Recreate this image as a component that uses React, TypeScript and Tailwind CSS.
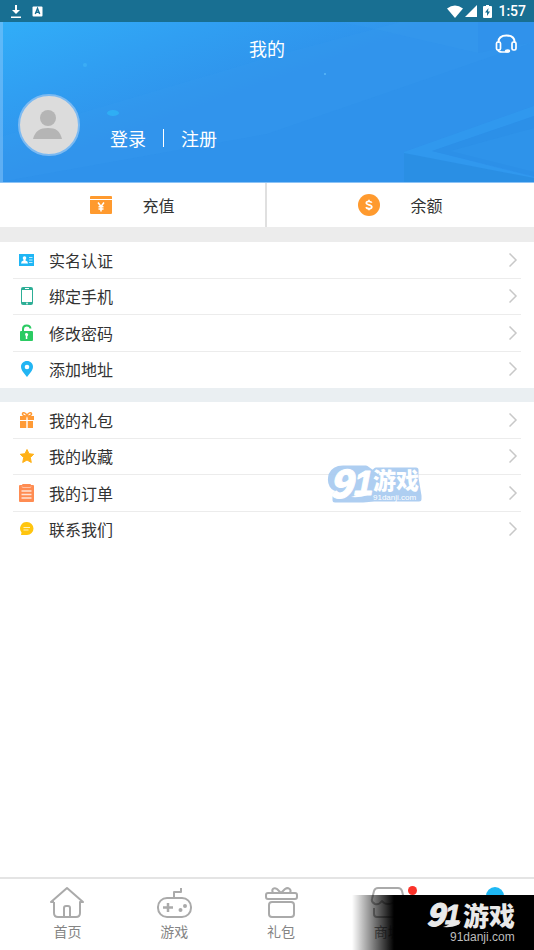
import type { ReactNode } from "react";

function HeaderArt() {
  return (
    <svg
      className="absolute inset-0 h-full w-full"
      viewBox="0 0 534 160"
      preserveAspectRatio="none"
      aria-hidden="true"
    >
      <defs>
        <linearGradient id="sky" gradientUnits="userSpaceOnUse" x1="50" y1="-20" x2="100" y2="120">
          <stop offset="0" stopColor="#31aef8" />
          <stop offset="0.5" stopColor="#309ff2" />
          <stop offset="1" stopColor="#2f92eb" />
        </linearGradient>
      </defs>
      <rect width="534" height="160" fill="url(#sky)" />
      <path d="M0 115L267 36L400 0H534V20L267 112L0 160Z" fill="#3aa2f4" opacity="0.15" />
      <path d="M340 0H478V31L370 6Z" fill="#3b9ff2" opacity="0.2" />
      <path d="M478 0H534V20L478 31Z" fill="#2385e0" opacity="0.1" />
      <path d="M404 130L534 84V94L432 129L534 155V160H404Z" fill="#319aef" opacity="0.8" />
      <path d="M404 131L534 156V160H404Z" fill="#2789de" opacity="0.6" />
      <path d="M432 129L534 94V154Z" fill="#2c90e8" />
      <path d="M450 129L534 106V150Z" fill="#2f95ec" opacity="0.5" />
      <ellipse cx="113" cy="91" rx="6" ry="3" fill="#2fb4f5" opacity="0.8" />
      <circle cx="85" cy="43" r="2" fill="#42b5f7" opacity="0.6" />
      <circle cx="325" cy="52" r="1" fill="#5ab8f8" />
      <rect width="3" height="160" fill="#8cc8fa" opacity="0.5" />
    </svg>
  );
}

function HeadsetIcon() {
  return (
    <svg width="22" height="20" viewBox="0 0 22 20" fill="none" stroke="#fff" strokeWidth="2" strokeLinecap="round">
      <path d="M3.500 8C3.500 4 6.500 1.500 11.500 1.500S19.500 4 19.500 8" />
      <rect x="1.500" y="8" width="4" height="8" rx="1.500" strokeWidth="1.700" />
      <rect x="17" y="8" width="4" height="8" rx="1.500" strokeWidth="1.700" />
      <path d="M3 16C3.500 17.500 5 18 7 18H12" strokeWidth="1.700" />
      <ellipse cx="12.500" cy="17" rx="2" ry="1" fill="#fff" strokeWidth="1.500" />
    </svg>
  );
}

function CardIcon() {
  return (
    <svg width="22" height="18" viewBox="0 0 22 18">
      <path d="M1 0H21Q22 0 22 1V3H0V1Q0 0 1 0Z" fill="#ff9a2e" />
      <path d="M0 4H22V17Q22 18 21 18H1Q0 18 0 17Z" fill="#ff9a2e" />
      <path d="M8 6.500L11 10.500L14 6.500M11 10.500V15.500M8.500 10.800H13.500M8.500 13H13.500" fill="none" stroke="#fff" strokeWidth="1.500" />
    </svg>
  );
}

function CoinIcon() {
  return (
    <svg width="22" height="22" viewBox="0 0 22 22">
      <circle cx="11" cy="11" r="11" fill="#ff9a2e" />
      <path d="M13.700 8.700C13.300 7.300 8.300 6.700 8.300 9.100C8.300 11.400 13.800 10.200 13.800 12.900C13.800 15.400 8.500 15 8.200 13M11 5.800V7.500M11 14.500V16.200" fill="none" stroke="#fff" strokeWidth="1.700" />
    </svg>
  );
}

const account: Array<{ title: string; icon: ReactNode }> = [
  {
    title: "实名认证",
    icon: (
      <>
        <rect x="1" y="3" width="15" height="12" fill="#1fb6f5" />
        <circle cx="6.500" cy="7" r="1.800" fill="#fff" />
        <path d="M3 12.500Q3 10 5.500 9.500V8H7.500V9.500Q10 10 10 12.500Z" fill="#fff" />
        <path d="M11 6.500H14.500M11 9H14.500M11 11.500H14.500" stroke="#bfe9fd" />
      </>
    ),
  },
  {
    title: "绑定手机",
    icon: (
      <>
        <rect x="3" y="0" width="12" height="18" rx="2" fill="#2dae96" />
        <rect x="4" y="3" width="10" height="12" fill="#fff" />
        <path d="M7 1.500H11" stroke="#fff" />
        <circle cx="9" cy="16.500" r="1" fill="#d5f0ea" />
      </>
    ),
  },
  {
    title: "修改密码",
    icon: (
      <>
        <path d="M5 8V5C5 .5 12 .5 12.500 4.500" fill="none" stroke="#2bcb63" strokeWidth="2" />
        <rect x="2" y="7" width="13" height="10" rx="1" fill="#2bcb63" />
        <path d="M7 10.500A1.600 1.600 0 1 1 10 11.500L9.300 12.300V15H7.800V12.300Z" fill="#fff" />
      </>
    ),
  },
  {
    title: "添加地址",
    icon: (
      <>
        <path d="M9 1C5.500 1 3 3.500 3 6.800C3 10.500 7 14.500 9 17C11 14.500 15 10.500 15 6.800C15 3.500 12.500 1 9 1Z" fill="#22b5f3" />
        <circle cx="9" cy="7" r="2.300" fill="#fff" />
      </>
    ),
  },
];

const services: Array<{ title: string; icon: ReactNode }> = [
  {
    title: "我的礼包",
    icon: (
      <>
        <path d="M9 5C6 5 4 4 4.500 2.500S8 1.500 9 5C10 1.500 13 1 13.500 2.500S12 5 9 5Z" fill="none" stroke="#ff9a35" strokeWidth="1.500" />
        <path d="M2 5H8.300V9H2ZM9.700 5H16V9H9.700ZM2 10H8.300V17H2ZM9.700 10H15V17H9.700Z" fill="#ff9a35" />
      </>
    ),
  },
  {
    title: "我的收藏",
    icon: (
      <path
        d="M9 2.500L11 6.700L15.700 7.300L12.300 10.500L13.300 15.500L9 13L4.700 15.500L5.700 10.500L2.300 7.300L7 6.700Z"
        fill="#ffb117"
        stroke="#ffb117"
        strokeLinejoin="round"
      />
    ),
  },
  {
    title: "我的订单",
    icon: (
      <>
        <path d="M2 1H15Q16 1 16 2V17Q16 18 15 18H2Q1 18 1 17V2Q1 1 2 1Z" fill="#ff8c52" />
        <rect x="4" y="0" width="9" height="3" rx="1" fill="#ff8c52" />
        <path d="M4 2.500Q4 3.500 5 3.500H12Q13 3.500 13 2.500" fill="none" stroke="#ffd2bb" strokeWidth="0.800" />
        <path d="M3.500 7H13.500M3.500 10.500H13.500M3.500 14H13.500" stroke="#ffe3d5" strokeWidth="1.300" />
      </>
    ),
  },
  {
    title: "联系我们",
    icon: (
      <>
        <path d="M9 2A6.500 6.500 0 1 1 9 15H3L3.500 12.500A6.500 6.500 0 0 1 9 2Z" fill="#ffc50f" />
        <path d="M5.500 7.500H12M5.500 10H10.500" stroke="#fff2bd" strokeWidth="1.200" />
      </>
    ),
  },
];

function Menu({ items }: { items: Array<{ title: string; icon: ReactNode }> }) {
  return (
    <ul className="grid h-[146px] grid-rows-4 bg-white px-[13px]">
      {items.map((item) => (
        <li key={item.title} className="border-b border-[#ececec] last:border-transparent">
          <a href="#" className="flex h-full items-center pl-[5px] pr-[3px]">
            <svg width="18" height="18" viewBox="0 0 18 18" aria-hidden="true">
              {item.icon}
            </svg>
            <span className="ml-[13px] flex-1 text-[16px] leading-[24px] text-[#333]">{item.title}</span>
            <svg width="9" height="14" viewBox="0 0 9 14" fill="none" stroke="#c8c8c8" strokeWidth="1.500" aria-hidden="true">
              <path d="M0.500 0.500L7 7L0.500 13.500" />
            </svg>
          </a>
        </li>
      ))}
    </ul>
  );
}

const tabs: Array<{ label: string; icon: ReactNode; dot?: boolean; iconOnly?: boolean }> = [
  {
    label: "首页",
    icon: (
      <path d="M5 16H2L18 2L34 16H31V27Q31 31 27 31H9Q5 31 5 27V16M15 31V22Q15 20 17 20H19Q21 20 21 22V31" />
    ),
  },
  {
    label: "游戏",
    icon: (
      <>
        <rect x="2" y="12" width="33" height="19" rx="9" />
        <path d="M18 11V6H25V2" />
        <path d="M12 17V26M7 21.500H17" strokeWidth="2.500" />
        <circle cx="24.500" cy="24" r="1" />
        <circle cx="29" cy="20" r="1" />
      </>
    ),
  },
  {
    label: "礼包",
    icon: (
      <>
        <rect x="3" y="7" width="31" height="6" rx="2" />
        <rect x="6" y="16" width="25" height="15" rx="3" />
        <path d="M10 7C8 3 11 1 14 3L18 7L22 3C25 1 29 3 27 7" />
      </>
    ),
  },
  {
    label: "商城",
    dot: true,
    icon: (
      <>
        <path d="M8 2H28Q31 2 32 5L34 13Q35 17 31 18Q27 19 25 15Q23 18 18 18Q14 18 12 15Q9 19 5 18Q1 16 2 13L4 5Q5 2 8 2Z" />
        <path d="M4 22V28Q4 31 7 31H29Q32 31 32 28V22" />
      </>
    ),
  },
  {
    label: "我的",
    iconOnly: true,
    icon: (
      <>
        <circle cx="18" cy="10" r="9" fill="#1fb8f4" stroke="none" />
        <path d="M3 32Q3 20 18 20Q33 20 33 32Z" fill="#1fb8f4" stroke="none" />
      </>
    ),
  },
];

export default function App() {
  return (
    <div className="relative flex min-h-screen w-full flex-col overflow-hidden bg-white font-['Noto_Sans_CJK_SC',sans-serif]">
      <div className="flex h-[22px] items-center bg-[#186f92] pl-[10px] pr-[8px] text-white">
        <svg width="12" height="14" viewBox="0 0 12 14" fill="#fff">
          <path d="M5 1H7V6H10L6 10L2 6H5ZM1 12.500H11V14H1Z" />
        </svg>
        <svg className="ml-[10px]" width="11" height="11" viewBox="0 0 11 11">
          <rect x="0.500" y="0.500" width="10" height="10" rx="1" fill="#fff" />
          <path d="M3.300 8L5.500 2.500L7.700 8M4 6.300H7" fill="none" stroke="#186f92" strokeWidth="1.400" />
        </svg>
        <svg className="ml-auto" width="16" height="13" viewBox="0 0 16 13" fill="#fff">
          <path d="M0 3.500Q8 -2.500 16 3.500L8 13Z" />
        </svg>
        <svg className="ml-[2px]" width="12" height="12" viewBox="0 0 12 12" fill="#fff">
          <path d="M12 0V12H0Z" />
        </svg>
        <svg className="ml-[6px]" width="9" height="13" viewBox="0 0 9 13">
          <path d="M3 0H6V1H8Q9 1 9 2V12Q9 13 8 13H1Q0 13 0 12V2Q0 1 1 1H3Z" fill="#fff" />
          <path d="M5.500 3L2 7.500H4V11L7 6.500H5Z" fill="#186f92" />
        </svg>
        <span className="ml-[6px] font-[Roboto,sans-serif] text-[14px] font-medium leading-[22px]">1:57</span>
      </div>

      <header className="relative h-[161px] border-b border-[#8cc3f6] text-white">
        <HeaderArt />
        <div className="relative grid h-[52px] grid-cols-3 items-center px-[17px]">
          <h1 className="col-start-2 text-center text-[18px] leading-[28px]">我的</h1>
          <button type="button" aria-label="客服" className="mt-[12px] self-start justify-self-end">
            <HeadsetIcon />
          </button>
        </div>
        <div className="relative mt-[20px] flex items-end pl-[18px]">
          <div className="h-[62px] w-[62px] overflow-hidden rounded-full border-2 border-[#7cbaf2] bg-[#dcdcdc]">
            <svg width="58" height="58" viewBox="0 0 58 58" fill="#b5b5b5">
              <circle cx="28" cy="22" r="8" />
              <path d="M13 43C15 35 20 32 28 32S40 35 42 43Z" />
            </svg>
          </div>
          <div className="mb-[4px] ml-[30px] flex items-center text-[18px] leading-[28px]">
            <a href="#">登录</a>
            <span className="mx-[17px] h-[18px] w-px bg-white" />
            <a href="#">注册</a>
          </div>
        </div>
      </header>

      <div className="grid h-[44px] grid-cols-2 text-[16px] leading-[24px] text-[#333]">
        <a href="#" className="flex items-center justify-center gap-[30px] border-r-2 border-[#e0e0e0]">
          <CardIcon />
          充值
        </a>
        <a href="#" className="flex items-center justify-center gap-[30px]">
          <CoinIcon />
          余额
        </a>
      </div>

      <div className="h-[15px] bg-[#ececec]" />
      <Menu items={account} />
      <div className="h-[14px] bg-[#eaeff2]" />
      <div className="relative">
        <Menu items={services} />
        <svg
          className="pointer-events-none absolute left-[326px] top-[62px] overflow-visible"
          width="98"
          height="40"
          viewBox="0 0 98 40"
          fill="#fff"
          stroke="#fff"
          strokeLinejoin="round"
          opacity="0.95"
        >
          <path
            d="M5 11Q8 4 17 4H40L47 9L50 6H90V14L93 32V35H48L37 36H9V31L14 26Q2 24 5 11Z"
            fill="#aaccf1"
            stroke="#aaccf1"
            strokeWidth="5"
          />
          <text x="3" y="34" fontFamily="Noto Sans CJK SC" fontSize="39" fontWeight="900" fontStyle="italic">9</text>
          <text x="28" y="31" fontFamily="Liberation Sans" fontSize="35" fontWeight="700" fontStyle="italic">1</text>
          <path d="M25 33Q32 31 36 27Q41 31 45 27Q43 34 25 33Z" stroke="none" />
          <text x="47" y="25" fontFamily="Noto Sans CJK SC" fontSize="23" fontWeight="900" stroke="none">游戏</text>
          <text x="47" y="36" fontFamily="Liberation Sans" fontSize="8" stroke="none">91danji.com</text>
        </svg>
      </div>

      <nav className="relative mt-auto h-[73px] border-t-2 border-[#e4e4e4] bg-white">
        <div className="-mr-[14px] ml-[14px] grid grid-cols-5">
          {tabs.map((tab) => (
            <a
              key={tab.label}
              href="#"
              aria-label={tab.label}
              className="flex flex-col items-center gap-px pt-[7px] text-[14px] leading-[20px] text-[#858585]"
            >
              <span className="relative">
                <svg width="36" height="34" viewBox="0 0 36 34" fill="none" stroke="#aaa" strokeWidth="2" strokeLinejoin="round">
                  {tab.icon}
                </svg>
                {tab.dot && <span className="absolute -right-[11px] top-0 h-[9px] w-[9px] rounded-full bg-[#fb3229]" />}
              </span>
              {!tab.iconOnly && <span>{tab.label}</span>}
            </a>
          ))}
        </div>
        <div className="absolute bottom-0 right-0 h-[55px] w-[182px] bg-linear-to-r from-transparent to-black to-[42px]">
          <svg className="absolute right-0 top-0 overflow-visible" width="110" height="55" viewBox="0 0 110 55" fill="#e9e9e9">
            <g stroke="#e9e9e9" strokeLinejoin="round">
              <text x="2" y="31" fontFamily="Noto Sans CJK SC" fontSize="31" fontWeight="900" fontStyle="italic">9</text>
              <text x="21" y="29" fontFamily="Liberation Sans" fontSize="28" fontWeight="700" fontStyle="italic">1</text>
            </g>
            <path d="M19 32Q26 30 28 26Q33 30 37 26Q35 33 19 32Z" />
            <text x="39" y="31" fontFamily="Noto Sans CJK SC" fontSize="26" fontWeight="900">游戏</text>
            <text x="26" y="46" fontFamily="Liberation Sans" fontSize="12" fill="#bdbdbd">91danji.com</text>
          </svg>
        </div>
      </nav>
    </div>
  );
}
